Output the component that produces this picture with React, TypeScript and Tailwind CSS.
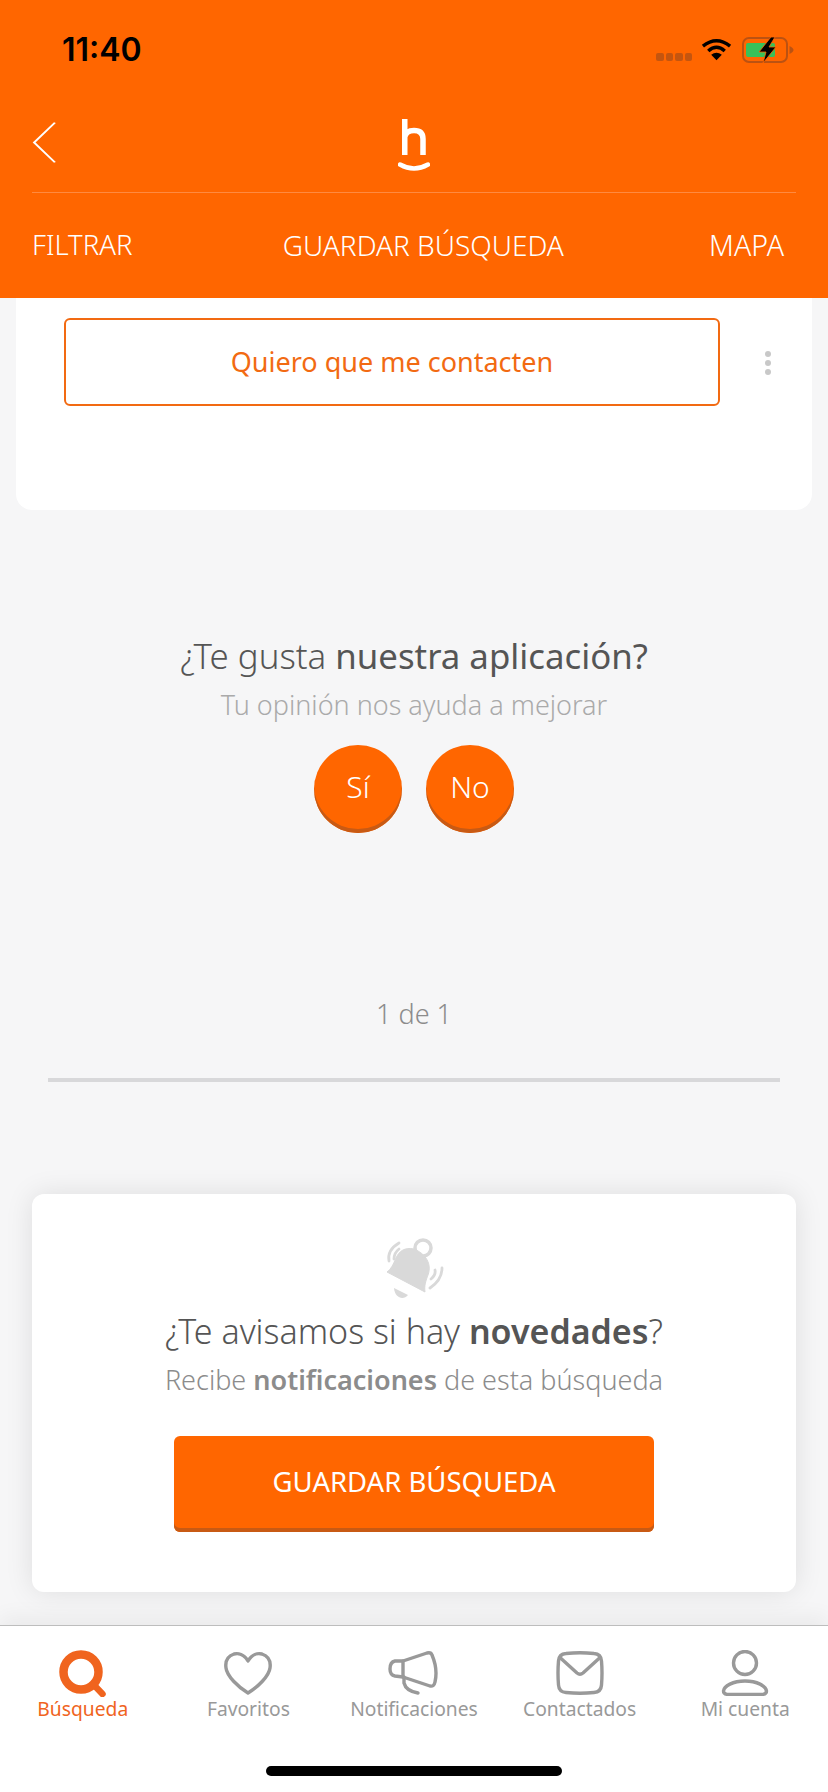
const font = "font-['Noto_Sans','Open_Sans',sans-serif]";

function Tab({ label, active, children }: { label: string; active?: boolean; children: React.ReactNode }) {
  return (
    <div className="flex flex-col items-center">
      <div className="h-[50px] flex items-center justify-center">{children}</div>
      <span className={`text-[19.25px] leading-[24px] -mt-[1px] ${active ? "text-[#f0641e]" : "text-[#999999]"}`}>{label}</span>
    </div>
  );
}

export default function App() {
  return (
    <div className={`w-[828px] h-[1792px] bg-[#f6f6f7] flex flex-col overflow-hidden ${font}`}>
      <header className="h-[298px] shrink-0 bg-[#ff6600] px-8 flex flex-col">
        <div className="h-[100px] flex items-start justify-between">
          <span className="mt-[32px] ml-[30px] font-['Inter',sans-serif] font-semibold text-[32px] leading-[36px] text-black">11:40</span>
          <div className="mt-[36px] h-[28px] flex items-center mr-[2px]">
            <div className="flex gap-[2px] mr-[9px] mt-[14px]">
              <span className="w-[7.5px] h-[8px] rounded-[2px] bg-[#c4550f]" />
              <span className="w-[7.5px] h-[8px] rounded-[2px] bg-[#c4550f]" />
              <span className="w-[7.5px] h-[8px] rounded-[2px] bg-[#c4550f]" />
              <span className="w-[7.5px] h-[8px] rounded-[2px] bg-[#c4550f]" />
            </div>
            <svg viewBox="0 0 32 24" className="w-[31px] h-[24px] mr-[10px] -mt-[2px]" fill="none" stroke="#000" strokeWidth="3.6">
              <path d="M2 9 Q16 -2 30 9" />
              <path d="M7.5 14 Q16 6.5 24.5 14" />
              <path d="M16 23.5 L10.5 18 Q16 13.500 21.5 18Z" fill="#000" stroke="none" />
            </svg>
            <svg viewBox="0 0 52 28" className="w-[52px] h-[28px]">
              <rect x="1" y="2" width="44" height="24" rx="6" fill="none" stroke="#bb5212" strokeWidth="2" />
              <rect x="4" y="7" width="29" height="14" rx="2" fill="#38c15a" />
              <path d="M47.500 10 Q51.500 12 51.500 14 Q51.500 16 47.500 18Z" fill="#bb5212" />
              <path d="M29 1 L17 16 L24 16 L21 27 L34 11 L27 11 L33 1Z" fill="#000" stroke="#ff6600" strokeWidth="0.8" />
            </svg>
          </div>
        </div>
        <div className="h-[93px] relative flex items-start justify-center border-b border-[#ff8a40]">
          <svg viewBox="0 0 24 60" className="absolute left-0 top-[22px] w-[25px] h-[41px]" preserveAspectRatio="none" fill="none" stroke="#fff" strokeWidth="2.200">
            <path d="M22 1 L2 30 L22 59" />
          </svg>
          <svg viewBox="0 0 32 54" className="w-[32px] h-[54px] mt-[19px]" fill="none" stroke="#fff">
            <path d="M6.750 0 V36 M6.750 18 Q8 11.500 16 11.500 Q25 11.500 25 20 V36" strokeWidth="5.500" />
            <path d="M2 45.500 Q16 53.500 30 45.500" strokeWidth="4.500" strokeLinecap="round" />
          </svg>
        </div>
        <div className="flex-1 flex items-center justify-between text-white text-[28px] pb-[1px] font-light mr-[12px]">
          <span className="text-[27.5px]">FILTRAR</span>
          <span className="ml-[5px]">GUARDAR BÚSQUEDA</span>
          <span className="text-[28.5px]">MAPA</span>
        </div>
      </header>

      <main className="flex-1 flex flex-col items-center">
        <div className="w-[796px] h-[212px] bg-white rounded-b-[16px] pt-5 pl-12 flex items-start">
          <button className="w-[656px] h-[88px] border-2 border-[#f26a12] rounded-[6px] text-[#f26a12] text-[27px]">Quiero que me contacten</button>
          <div className="ml-[45px] mt-[33px] flex flex-col gap-[3px]">
            <span className="w-[6px] h-[6px] rounded-full bg-[#c8c8c8]" />
            <span className="w-[6px] h-[6px] rounded-full bg-[#c8c8c8]" />
            <span className="w-[6px] h-[6px] rounded-full bg-[#c8c8c8]" />
          </div>
        </div>

        <h2 className="mt-[123px] text-[34.8px] leading-[46px] text-[#555] font-light">¿Te gusta <span className="font-normal">nuestra aplicación?</span></h2>
        <p className="mt-[9px] text-[27px] leading-[34px] text-[#aaa] font-light">Tu opinión nos ayuda a mejorar</p>
        <div className="mt-[23px] flex gap-[24px]">
          <button className="w-[88px] h-[88px] rounded-full bg-[#ff6600] shadow-[inset_0_-4px_0_#c85a14] text-white text-[30px] font-light pb-[6px]">Sí</button>
          <button className="w-[88px] h-[88px] rounded-full bg-[#ff6600] shadow-[inset_0_-4px_0_#c85a14] text-white text-[30px] font-light pb-[6px]">No</button>
        </div>

        <p className="mt-[164px] text-[27px] leading-[34px] text-[#8c8c8c] font-light">1 de 1</p>
        <div className="mt-[47px] w-[732px] h-[4px] bg-[#d8d8da]" />

        <section className="mt-[112px] w-[764px] h-[398px] bg-white rounded-[12px] shadow-[0_0_28px_rgba(0,0,0,0.1)] flex flex-col items-center pt-[44px]">
          <svg viewBox="10 8 60 62" className="w-[60px] h-[62px]" fill="none">
            <path d="M40 19 C31 17 25 21 22 28 C19 35 17 39 13 42 L51 62 C50 56 52 50 54 45 C58 34 52 24 40 19Z" fill="#d9d9d9" stroke="#d9d9d9" strokeWidth="1" strokeLinejoin="round" />
            <path d="M20 58 L34 65 C30 70 21 69 20 58Z" fill="#d9d9d9" />
            <circle cx="49" cy="18" r="8" stroke="#d9d9d9" strokeWidth="3.500" />
            <g stroke="#d9d9d9" strokeWidth="2.800" strokeLinecap="round">
              <path d="M15 31 Q13 20 25 13" />
              <path d="M20 29 Q20 23 25 19" />
              <path d="M57 49 Q62 45 61 40" />
              <path d="M56 58 Q68 50 68 38" />
            </g>
          </svg>
          <h2 className="mt-[8px] text-[34px] leading-[46px] text-[#555] font-light">¿Te avisamos si hay <span className="font-semibold">novedades</span>?</h2>
          <p className="mt-[9px] text-[27px] leading-[34px] text-[#8c8c8c] font-light">Recibe <span className="font-semibold">notificaciones</span> de esta búsqueda</p>
          <button className="mt-[39px] w-[480px] h-[96px] rounded-[6px] bg-[#ff6600] shadow-[inset_0_-4px_0_#c85a14] text-white text-[27.5px] pb-[4px]">GUARDAR BÚSQUEDA</button>
        </section>
      </main>

      <footer className="relative h-[167px] shrink-0 bg-white border-t border-[#bdbdbd] shadow-[0_-8px_20px_rgba(0,0,0,0.05)]">
        <nav className="grid grid-cols-5 pt-[22px]">
          <Tab label="Búsqueda" active>
            <svg viewBox="0 0 47 47" className="w-[47px] h-[47px]" fill="none" stroke="#f0641e">
              <circle cx="22" cy="22" r="17.500" strokeWidth="8.500" />
              <path d="M34 34 L43.500 44" strokeWidth="6.500" strokeLinecap="round" />
            </svg>
          </Tab>
          <Tab label="Favoritos">
            <svg viewBox="0 0 48 44" className="w-[48px] h-[44px]" fill="none" stroke="#999" strokeWidth="3.400" strokeLinejoin="round">
              <path d="M24 10 C20 3 14 2 10 3 C4 5 1 10 2 17 C3 25 14 36 24 42 C34 36 45 25 46 17 C47 10 44 5 38 3 C34 2 28 3 24 10Z" />
            </svg>
          </Tab>
          <Tab label="Notificaciones">
            <svg viewBox="13 11 52 46" className="w-[52px] h-[46px]" fill="none" stroke="#999" strokeWidth="3.400" strokeLinejoin="round" strokeLinecap="round">
              <path d="M28 22 L52 14 Q56 13 57 16 Q63 30 60 43 Q59 48 55 47 L28 38Z" />
              <path d="M28 22 L20 22 Q15 23 15 30 Q15 36 20 37 L28 38" />
              <path d="M29 38 L29 44 Q31 52 43 54" />
            </svg>
          </Tab>
          <Tab label="Contactados">
            <svg viewBox="0 0 48 44" className="w-[48px] h-[44px]" fill="none" stroke="#999" strokeWidth="3.400" strokeLinejoin="round" strokeLinecap="round">
              <path d="M10 2.500 Q24 1 38 2.500 Q45 3 45.500 10 Q46.500 22 45.500 34 Q45 41 38 41.500 Q24 43 10 41.500 Q3 41 2.500 34 Q1.500 22 2.500 10 Q3 3 10 2.500Z" />
              <path d="M4.500 7 L21 22 Q24 24.500 27 22 L43.500 7" />
            </svg>
          </Tab>
          <Tab label="Mi cuenta">
            <svg viewBox="0 0 48 46" className="w-[48px] h-[46px]" fill="none" stroke="#999" strokeWidth="3.400">
              <circle cx="24" cy="13" r="11.500" />
              <path d="M24 31 C36 31 45 36 45.500 41 C45.500 44 43 44.500 40 44.500 H8 C5 44.500 2.500 44 2.500 41 C3 36 12 31 24 31Z" />
            </svg>
          </Tab>
        </nav>
        <div className="absolute left-[266px] top-[140px] w-[296px] h-[10px] rounded-full bg-black" />
      </footer>
    </div>
  );
}
